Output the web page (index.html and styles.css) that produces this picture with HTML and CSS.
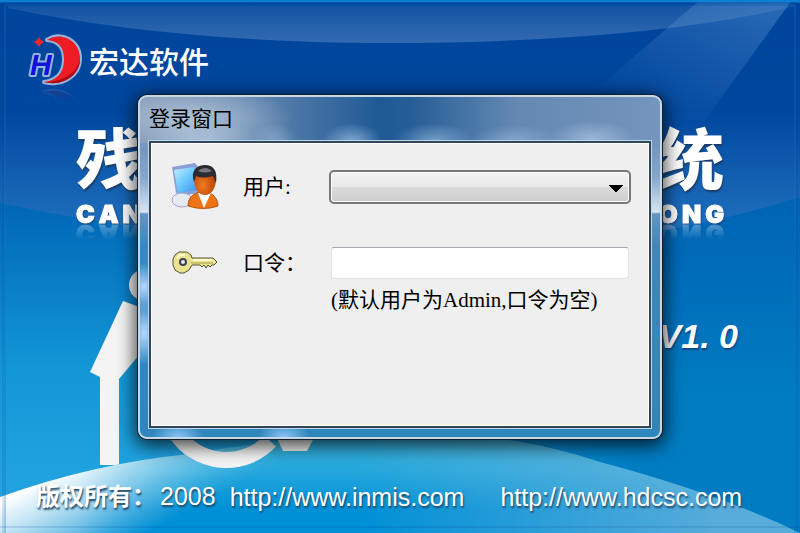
FILE: index.html
```
<!DOCTYPE html>
<html lang="zh-CN">
<head>
    <meta charset="UTF-8">
    <meta name="viewport" content="width=device-width, initial-scale=1.0">
    <title>登录窗口</title>
    <link rel="stylesheet" href="styles.css">
</head>
<body>
    <div class="splash">
        <!-- 背景 -->
        <svg class="backdrop" viewBox="0 0 800 533" preserveAspectRatio="none" aria-hidden="true">
            <defs>
                <linearGradient id="upper" x1="0" y1="0" x2="0" y2="1">
                    <stop offset="0" stop-color="#00459c"/>
                    <stop offset="0.45" stop-color="#00479f"/>
                    <stop offset="1" stop-color="#2476c2"/>
                </linearGradient>
                <linearGradient id="lower" gradientUnits="userSpaceOnUse" x1="0" y1="200" x2="0" y2="533">
                    <stop offset="0" stop-color="#0065b6"/>
                    <stop offset="0.5" stop-color="#1296d6"/>
                    <stop offset="0.85" stop-color="#22a3e0"/>
                </linearGradient>
                <linearGradient id="duskColor" x1="0" y1="0" x2="0" y2="1">
                    <stop offset="0" stop-color="#0062b4"/>
                    <stop offset="0.6" stop-color="#007cc2"/>
                    <stop offset="1" stop-color="#007cc4"/>
                </linearGradient>
                <linearGradient id="duskFade" gradientUnits="userSpaceOnUse" x1="0" y1="0" x2="800" y2="0">
                    <stop offset="0.3" stop-color="#000"/>
                    <stop offset="0.8" stop-color="#fff"/>
                </linearGradient>
                <mask id="duskMask">
                    <rect width="800" height="533" fill="url(#duskFade)"/>
                </mask>
                <linearGradient id="lens" x1="0" y1="0" x2="0" y2="1">
                    <stop offset="0" stop-color="#fff" stop-opacity="0.08"/>
                    <stop offset="1" stop-color="#fff" stop-opacity="0.2"/>
                </linearGradient>
                <linearGradient id="streak" x1="1" y1="0" x2="0" y2="1">
                    <stop offset="0" stop-color="#8fc4f0" stop-opacity="0.3"/>
                    <stop offset="0.8" stop-color="#8fc4f0" stop-opacity="0"/>
                </linearGradient>
                <linearGradient id="hill" gradientUnits="userSpaceOnUse" x1="0" y1="440" x2="0" y2="533">
                    <stop offset="0" stop-color="#34b0dc"/>
                    <stop offset="0.3" stop-color="#26a8dc"/>
                    <stop offset="0.75" stop-color="#0090d6"/>
                </linearGradient>
                <linearGradient id="hillSide" gradientUnits="userSpaceOnUse" x1="0" y1="0" x2="800" y2="0">
                    <stop offset="0.45" stop-color="#7cb8dc" stop-opacity="0"/>
                    <stop offset="0.9" stop-color="#7cb8dc" stop-opacity="0.7"/>
                </linearGradient>
                <linearGradient id="snow" gradientUnits="userSpaceOnUse" x1="90" y1="455" x2="135" y2="540">
                    <stop offset="0" stop-color="#fff"/>
                    <stop offset="0.3" stop-color="#e2f2fa" stop-opacity="0.85"/>
                    <stop offset="1" stop-color="#fff" stop-opacity="0"/>
                </linearGradient>
                <linearGradient id="snowFade" gradientUnits="userSpaceOnUse" x1="80" y1="0" x2="330" y2="0">
                    <stop offset="0" stop-color="#fff"/>
                    <stop offset="1" stop-color="#000"/>
                </linearGradient>
                <mask id="snowMask">
                    <rect width="800" height="533" fill="url(#snowFade)"/>
                </mask>
            </defs>
            <rect width="800" height="533" fill="url(#lower)"/>
            <rect y="190" width="800" height="343" fill="url(#duskColor)" mask="url(#duskMask)"/>
            <path d="M0 0H800V197Q690 232 580 240Q400 254 200 236Q90 222 0 203Z" fill="url(#upper)"/>
            <path d="M8 6H796Q640 43 380 43Q170 42 8 8Z" fill="url(#lens)"/>
            <path d="M792 0L705 120L560 120L700 0Z" fill="url(#streak)"/>
            <!-- 轮椅标志 -->
            <g fill="#f4f4f4">
                <circle cx="145" cy="285" r="16"/>
                <path d="M123 301L170 318L119 379V465H100V377L90 372Z"/>
            </g>
            <path d="M0 497Q95 463 190 454Q310 433 430 433Q520 435 600 462Q720 494 800 533H0Z" fill="url(#hill)"/>
            <path d="M0 497Q95 463 190 454Q310 433 430 433Q520 435 600 462Q720 494 800 533H0Z" fill="url(#hillSide)"/>
            <path d="M0 497Q95 463 190 454Q310 433 430 433V533H0Z" fill="url(#snow)" mask="url(#snowMask)"/>
            <path d="M176 433A60 60 0 0 0 270 441" fill="none" stroke="#f4f4f4" stroke-width="16"/>
            <path d="M276 436L283 451H307L315 436Z" fill="#f4f4f4"/>
            <!-- 边框 -->
            <path d="M0 1H800" stroke="#0b7fd0" stroke-width="3"/>
            <path d="M5 533V5H795V533" fill="none" stroke="#1a70be" stroke-opacity="0.6" stroke-width="1"/>
            <path d="M3 533V3H797V533M0 527H800" fill="none" stroke="#003c86" stroke-opacity="0.25" stroke-width="1"/>
        </svg>

        <header class="brand">
            <svg class="logo" viewBox="0 0 56 56" aria-hidden="true">
                <g stroke="#bcd0ea" stroke-opacity="0.8" stroke-width="4" stroke-linejoin="round">
                    <path d="M20 8C34 -1 53 8 53 27C53 43 36 55 17 50C32 48 37 39 37 27C37 17 33 9 20 8Z"/>
                    <text x="3" y="43" class="logo-letter">H</text>
                </g>
                <path d="M20 8C34 -1 53 8 53 27C53 43 36 55 17 50C32 48 37 39 37 27C37 17 33 9 20 8Z" fill="#ee1c24"/>
                <path d="M53 27C53 43 36 55 17 50C35 50 50 42 53 27Z" fill="#a90b16"/>
                <path d="M12 5L14 8L17 10L14 12L12 15L10 12L7 10L10 8Z" fill="#f22"/>
                <text x="3" y="43" class="logo-letter">H</text>
            </svg>
            <span class="company">宏达软件</span>
        </header>

        <div class="product">
            <div class="product-name"><span>残</span><span>统</span></div>
            <div class="product-pinyin">
                <div class="letters"><span>C</span><span>A</span><span>N</span></div>
                <div class="letters"><span>O</span><span>N</span><span>G</span></div>
            </div>
        </div>

        <div class="version">V1. 0</div>

        <footer class="copyright">
            <span class="owner">版权所有：<span class="year">2008</span></span>
            <a class="site" href="http://www.inmis.com">http://www.inmis.com</a>
            <a class="site" href="http://www.hdcsc.com">http://www.hdcsc.com</a>
        </footer>
    </div>

    <!-- 登录窗口 -->
    <div class="overlay">
        <section class="window" role="dialog" aria-labelledby="window-title">
            <h1 class="window-title" id="window-title">登录窗口</h1>
            <form class="login">
                <svg class="icon" viewBox="0 0 48 48" aria-hidden="true">
                    <defs>
                        <linearGradient id="screen" x1="0" y1="0" x2="1" y2="1">
                            <stop offset="0" stop-color="#c4f1ff"/>
                            <stop offset="0.5" stop-color="#6cc8fb"/>
                            <stop offset="1" stop-color="#3a90ee"/>
                        </linearGradient>
                        <radialGradient id="skin" cx="0.4" cy="0.65" r="0.6">
                            <stop offset="0" stop-color="#f27a22"/>
                            <stop offset="1" stop-color="#b84304"/>
                        </radialGradient>
                    </defs>
                    <path d="M1 4L24 0L28 5V30L9 33L5 30Z" fill="#8c9fd4"/>
                    <path d="M3 7L23 4L26 27L7 30Z" fill="url(#screen)"/>
                    <ellipse cx="11" cy="37" rx="10" ry="7" fill="#e8eaf3" stroke="#9ca6cf"/>
                    <path d="M17 43C17 34 23 29 33 29C42 29 47 36 47 43Q33 48 17 43Z" fill="#ed7414" stroke="#b9530d"/>
                    <path d="M27 30L33 45L40 30Z" fill="#f5fbff"/>
                    <path d="M23 15C23 26 28 32 34 32C40 32 45 26 45 15C45 7 40 4 34 4S23 7 23 15Z" fill="url(#skin)"/>
                    <path d="M22 15C21 6 27 2 34 2C42 2 47 7 45 20Q43 15 42 13Q32 16 25 13L23 19Z" fill="#2b2b31"/>
                    <path d="M27 8Q34 2 41 8Q34 11 27 8Z" fill="#77777f"/>
                </svg>
                <label class="caption" for="user">用户:</label>
                <select class="user" id="user"></select>

                <svg class="icon key" viewBox="0 0 48 24" aria-hidden="true">
                    <path d="M8 1H16L20 4L21 7H42L46 11L43 14H41L39 16L37 14L35 17L33 14L31 16L29 14H21L18 19L13 22H9L4 19L2 14V8L4 4Z" fill="#e9e38f" stroke="#55523a" stroke-linejoin="round"/>
                    <path d="M6 7L9 4H14M22 9H41" fill="none" stroke="#fffbd0" stroke-width="2"/>
                    <path d="M20 12H42" stroke="#aaa04f" stroke-width="1"/>
                    <circle cx="12" cy="11" r="3" fill="#e8e8ee" stroke="#3d4252" stroke-width="2"/>
                </svg>
                <label class="caption" for="password">口令：</label>
                <input class="password" id="password" type="password">

                <p class="hint">(默认用户为Admin,口令为空)</p>
            </form>
        </section>
    </div>
</body>
</html>
```
FILE: styles.css
```
* {
    box-sizing: border-box;
}

body {
    margin: 0;
    background-color: #0068b8;
    font-family: "Liberation Sans", "Noto Sans CJK SC", sans-serif;
}

.splash {
    position: relative;
    display: flex;
    flex-direction: column;
    min-height: 100vh;
    overflow: hidden;
    color: #fff;
}

/* 背景图铺满整个窗口 */
.backdrop {
    position: absolute;
    top: 0;
    left: 0;
    width: 100%;
    height: 100%;
    z-index: -1;
}

.brand {
    display: flex;
    align-items: center;
    gap: 6px;
    padding: 32px 27px 0;
}

.logo {
    width: 56px;
    height: 56px;
    -webkit-box-reflect: below -2px linear-gradient(transparent 75%, rgba(255, 255, 255, 0.2));
}

.logo-letter {
    font-family: "Liberation Sans", sans-serif;
    font-size: 30px;
    font-weight: bold;
    font-style: italic;
    fill: #1212d8;
}

.company {
    padding-top: 6px;
    font-size: 30px;
    font-weight: 500;
    line-height: 40px;
}

.product {
    padding: 34px 76px 0;
}

.product-name,
.product-pinyin,
.letters {
    display: flex;
    justify-content: space-between;
}

.product-name {
    font-size: 66px;
    font-weight: 900;
    line-height: 78px;
    text-shadow: 1px 2px 2px #1c3c66;
}

.letters {
    gap: 4px;
    font-family: Inter, sans-serif;
    font-size: 25px;
    font-weight: 900;
    line-height: 28px;
    text-shadow: 1px 1px 2px #1c3c66;
    -webkit-text-stroke: 1px #fff;
    -webkit-box-reflect: below -8px linear-gradient(transparent 30%, rgba(255, 255, 255, 0.4));
}

.version {
    margin-top: 88px;
    padding-right: 62px;
    text-align: right;
    font-size: 34px;
    font-weight: bold;
    font-style: italic;
    line-height: 40px;
    text-shadow: 1px 2px 2px #0a4a88;
}

.copyright {
    display: flex;
    align-items: center;
    margin-top: auto;
    padding: 0 36px 18px;
    font-size: 25px;
    line-height: 36px;
    text-shadow: 1px 2px 2px #1d4766;
}

.owner {
    font-size: 24px;
    font-weight: bold;
}

.year {
    margin-left: 4px;
    font-size: 25px;
    font-weight: normal;
}

.site {
    margin-left: 14px;
    color: #fff;
    text-decoration: none;
}

.site + .site {
    margin-left: 36px;
}

/* 登录窗口浮在启动画面上方 */
.overlay {
    position: absolute;
    top: 0;
    left: 0;
    display: flex;
    align-items: center;
    justify-content: center;
    width: 100%;
    min-height: 100vh;
}

.window {
    width: 66%;
    max-width: 524px;
    padding: 0 9px 9px;
    border: 2px solid #c6d8e8;
    border-radius: 9px;
    /* 玻璃边框：标题栏光斑，侧边光斑，底色 */
    background:
        radial-gradient(ellipse 100px 34px at 54px 22px, rgba(215, 228, 240, 0.6), transparent) no-repeat,
        radial-gradient(ellipse 60px 20px at 64px 44px, rgba(220, 235, 250, 0.4), transparent) no-repeat,
        radial-gradient(ellipse 24px 18px at 134px 44px, rgba(190, 215, 240, 0.4), transparent) no-repeat,
        radial-gradient(ellipse 30px 18px at 212px 44px, rgba(180, 212, 245, 0.6), transparent) no-repeat,
        radial-gradient(ellipse 40px 18px at 294px 44px, rgba(180, 212, 245, 0.5), transparent) no-repeat,
        radial-gradient(ellipse 46px 16px at 374px 44px, rgba(180, 212, 245, 0.4), transparent) no-repeat,
        radial-gradient(ellipse 44px 18px at 452px 42px, rgba(200, 222, 245, 0.5), transparent) no-repeat,
        linear-gradient(90deg, #8299b6, #6788af 20%, #1f5a96 46%, #255d97 52%, #6388b2 72%, #7495bd) 0 0 / 100% 46px no-repeat,
        radial-gradient(ellipse 16px 24px at 4px 190px, #b4d8ff, transparent) no-repeat,
        radial-gradient(ellipse 16px 32px at 4px 236px, #b4d8ff, transparent) no-repeat,
        radial-gradient(ellipse 26px 16px at 38px 100%, #8cc4f4, transparent) no-repeat,
        radial-gradient(ellipse 26px 16px at 144px 100%, #8cc4f4, transparent) no-repeat,
        linear-gradient(#7294bd 46px, #86a6cb 80px, #d9e5f2 115px, #6494c2 117px, #3b88bf 150px, #2f86bb 100%);
    box-shadow: 0 0 0 1px #10202e, 0 4px 18px 3px rgba(0, 0, 0, 0.75);
}

.window-title {
    margin: 0;
    color: #000;
    font-size: 21px;
    font-weight: normal;
    line-height: 44px;
}

.login {
    display: grid;
    grid-template-columns: 48px 62px 1fr;
    column-gap: 24px;
    align-items: center;
    padding: 20px 18px 112px 20px;
    border: 2px solid #31465a;
    box-shadow: 0 0 0 1px #bcd6ea, inset 0 0 0 1px #fff;
    background-color: #efefef;
    color: #000;
    font-family: "Liberation Serif", "Noto Sans CJK SC", serif;
    font-size: 21px;
    line-height: 28px;
}

.icon {
    width: 48px;
    height: 48px;
}

.key {
    height: 24px;
}

.key,
.key + .caption,
.password {
    margin-top: 36px;
}

.caption {
    white-space: nowrap;
}

.user {
    width: 100%;
    height: 34px;
    appearance: none;
    border: 2px solid #777;
    border-radius: 5px;
    box-shadow: inset 0 0 0 1px #fafafa;
    /* 下拉箭头 */
    background:
        conic-gradient(from -45deg at 50% 100%, transparent 0) no-repeat,
        linear-gradient(to bottom right, #000 50%, transparent 51%) right 6px top 13px / 7px 7px no-repeat,
        linear-gradient(to bottom left, #000 50%, transparent 51%) right 13px top 13px / 7px 7px no-repeat,
        linear-gradient(#f2f2f2, #e8e8e8 50%, #dadada 51%, #cdcdcd);
}

.password {
    width: calc(100% - 4px);
    height: 32px;
    margin-left: 2px;
    padding: 2px 6px;
    border: 1px solid #dfe3ea;
    border-top-color: #a6a9b0;
    border-radius: 3px;
    background-color: #fff;
    font-size: 21px;
}

.hint {
    grid-column: 3;
    margin: 7px 0 0 2px;
    white-space: nowrap;
}
```
